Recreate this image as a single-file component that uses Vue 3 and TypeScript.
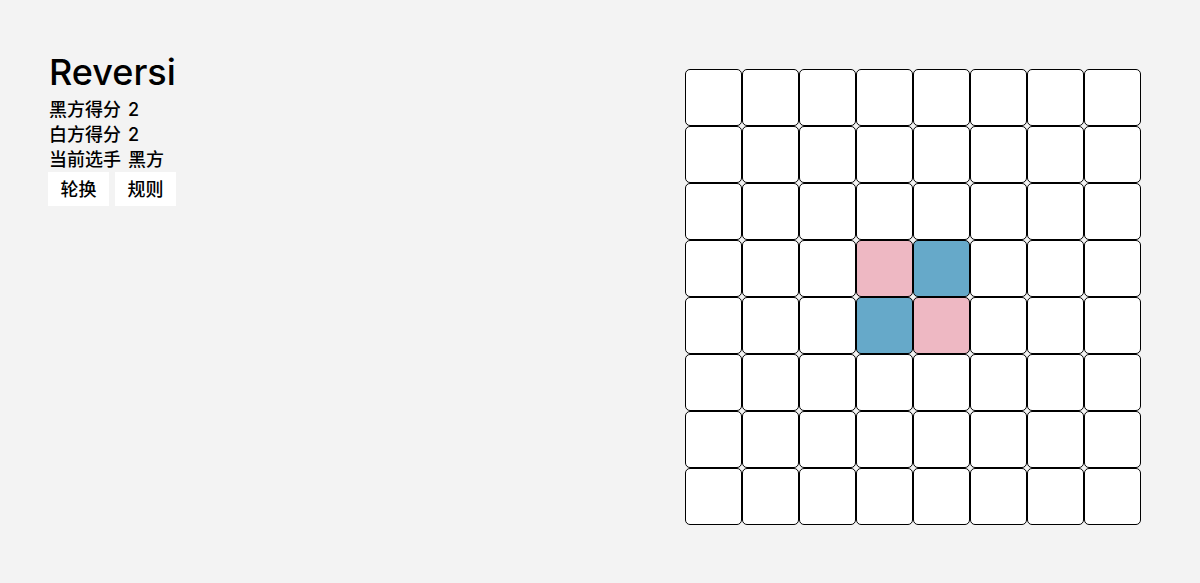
<script setup lang="ts">
import { computed, ref } from 'vue'

type Cell = 'empty' | 'black' | 'white'
type Player = 'black' | 'white'

const size = 8
const names: Record<Player, string> = { black: '黑方', white: '白方' }
const directions = [-1, 0, 1].flatMap((r) => [-1, 0, 1].map((c) => [r, c])).filter(([r, c]) => r || c)

const board = ref<Cell[][]>(
  Array.from({ length: size }, () => Array.from({ length: size }, (): Cell => 'empty'))
)
board.value[3][3] = 'white'
board.value[3][4] = 'black'
board.value[4][3] = 'black'
board.value[4][4] = 'white'

const player = ref<Player>('black')

const count = (side: Player) => board.value.flat().filter((cell) => cell === side).length
const blackScore = computed(() => count('black'))
const whiteScore = computed(() => count('white'))

function switchPlayer() {
  player.value = player.value === 'black' ? 'white' : 'black'
}

function play(row: number, col: number) {
  if (board.value[row][col] !== 'empty') return
  const flips: number[][] = []
  for (const [dr, dc] of directions) {
    const line: number[][] = []
    let r = row + dr
    let c = col + dc
    while (board.value[r]?.[c] && board.value[r][c] !== 'empty' && board.value[r][c] !== player.value) {
      line.push([r, c])
      r += dr
      c += dc
    }
    if (board.value[r]?.[c] === player.value) flips.push(...line)
  }
  if (!flips.length) return
  for (const [r, c] of [[row, col], ...flips]) board.value[r][c] = player.value
  switchPlayer()
}
</script>

<template>
  <main class="game">
    <section class="info">
      <header class="status">
        <h1>Reversi</h1>
        <p><span>黑方得分</span> <span>{{ blackScore }}</span></p>
        <p><span>白方得分</span> <span>{{ whiteScore }}</span></p>
        <p><span>当前选手</span> <span>{{ names[player] }}</span></p>
      </header>
      <div class="actions">
        <button type="button" @click="switchPlayer">轮换</button>
        <button type="button">规则</button>
      </div>
    </section>
    <section class="board">
      <template v-for="(row, r) in board" :key="r">
        <button
          v-for="(cell, c) in row"
          :key="c"
          type="button"
          class="cell"
          :class="cell"
          :aria-label="`${r + 1}, ${c + 1}`"
          @click="play(r, c)"
        ></button>
      </template>
    </section>
  </main>
</template>

<style>
body {
  margin: 0;
  background: #f3f3f3;
}
</style>

<style scoped>
.game {
  display: flex;
  justify-content: space-between;
  align-items: flex-start;
  min-height: 100vh;
  box-sizing: border-box;
  padding: 48px 59px 48px 48px;
  color: #000;
  font-family: Inter, "Noto Sans CJK SC", sans-serif;
  font-size: 18px;
  font-weight: 500;
  line-height: 25px;
}

.status {
  padding-left: 1px;
}

h1 {
  margin: 0;
  font-size: 36px;
  font-weight: 500;
  line-height: 49px;
}

p {
  display: flex;
  gap: 7px;
  margin: 0;
}

.actions {
  display: flex;
  gap: 6px;
}

.actions button {
  min-width: 61px;
  padding: 6px 12px 4px;
  border: 0;
  background: #fff;
  color: inherit;
  font: inherit;
  line-height: 24px;
  cursor: pointer;
}

.board {
  display: grid;
  grid-template-columns: repeat(8, 57px);
  grid-auto-rows: 57px;
  margin-top: 21px;
}

.cell {
  padding: 0;
  border: 1px solid #000;
  border-radius: 5px;
  background: #fff;
}

.cell.black {
  background: #66a9c9;
}

.cell.white {
  background: #eeb8c3;
}
</style>
